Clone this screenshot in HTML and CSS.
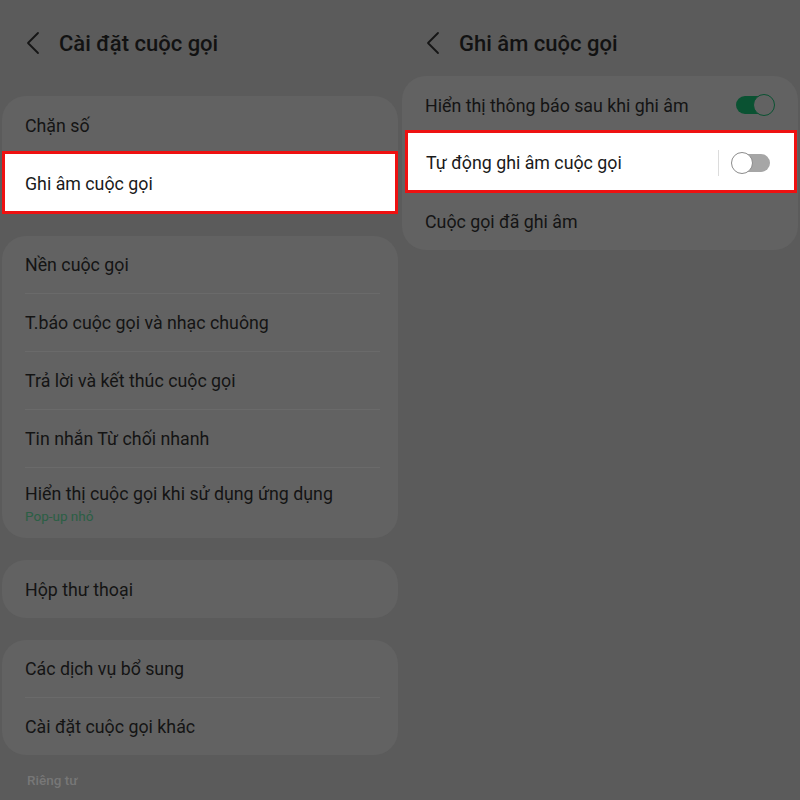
FILE: index.html
```html
<!DOCTYPE html>
<html lang="vi">
<head>
<meta charset="utf-8">
<title>Cài đặt cuộc gọi</title>
<link rel="stylesheet" href="styles.css">
</head>
<body>
<div class="screen">
  <section class="panel">
    <header class="header">
      <svg class="back" width="16" height="24" viewBox="0 0 16 24"><polyline points="12,2 2,12 12,22" fill="none" stroke="#151515" stroke-width="1.8" stroke-linecap="round" stroke-linejoin="round"/></svg>
      <h1 class="title">Cài đặt cuộc gọi</h1>
    </header>
    <div class="card first">
      <div class="row">Chặn số</div>
      <div class="row hl hl-left">Ghi âm cuộc gọi</div>
    </div>
    <div class="card list">
      <div class="row">Nền cuộc gọi</div>
      <hr class="sep">
      <div class="row">T.báo cuộc gọi và nhạc chuông</div>
      <hr class="sep">
      <div class="row">Trả lời và kết thúc cuộc gọi</div>
      <hr class="sep">
      <div class="row">Tin nhắn Từ chối nhanh</div>
      <hr class="sep">
      <div class="row two">
        <span>Hiển thị cuộc gọi khi sử dụng ứng dụng</span>
        <span class="sub">Pop-up nhỏ</span>
      </div>
    </div>
    <div class="card">
      <div class="row">Hộp thư thoại</div>
    </div>
    <div class="card list last">
      <div class="row">Các dịch vụ bổ sung</div>
      <hr class="sep">
      <div class="row">Cài đặt cuộc gọi khác</div>
    </div>
    <div class="section-label">Riêng tư</div>
  </section>

  <section class="panel">
    <header class="header">
      <svg class="back" width="16" height="24" viewBox="0 0 16 24"><polyline points="12,2 2,12 12,22" fill="none" stroke="#151515" stroke-width="1.8" stroke-linecap="round" stroke-linejoin="round"/></svg>
      <h1 class="title">Ghi âm cuộc gọi</h1>
    </header>
    <div class="card">
      <div class="row toggle-row">
        <span>Hiển thị thông báo sau khi ghi âm</span>
        <span class="switch on"><span class="knob"></span></span>
      </div>
      <div class="row toggle-row hl hl-right">
        <span>Tự động ghi âm cuộc gọi</span>
        <span class="ctrl">
          <span class="vline"></span>
          <span class="switch off"><span class="knob"></span></span>
        </span>
      </div>
      <div class="row">Cuộc gọi đã ghi âm</div>
    </div>
  </section>
</div>
</body>
</html>
```

FILE: styles.css
```css
* { box-sizing: border-box; }

html, body {
  margin: 0;
  padding: 0;
  background: #5b5b5b;
  font-family: Roboto, "Noto Sans", "Liberation Sans", sans-serif;
  color: #141414;
}

.screen {
  display: grid;
  grid-template-columns: 400px 400px;
  width: 800px;
  height: 800px;
  overflow: hidden;
}

.panel {
  padding: 0 2px;
}

.header {
  height: 76px;
  padding: 10px 0 0 24px;
  display: flex;
  align-items: center;
}

.back {
  display: block;
  flex: none;
}

.title {
  margin: 0 0 0 17px;
  font-size: 22px;
  font-weight: 500;
  color: #121212;
}

.card {
  background: #626262;
  border-radius: 24px;
  margin-bottom: 22px;
}

.card.first {
  margin-top: 20px;
  margin-bottom: 24px;
}

.card.last {
  margin-bottom: 14px;
}

.row {
  height: 58px;
  padding: 0 23px;
  display: flex;
  align-items: center;
  font-size: 17.8px;
  color: #141414;
}

.list .row {
  height: 57px;
}

.list .row.two {
  height: 70px;
  flex-direction: column;
  align-items: flex-start;
  justify-content: center;
  gap: 4px;
  padding-top: 1px;
}

.sub {
  font-size: 13.5px;
  color: #2b5f45;
}

.sep {
  margin: 0 18px 0 23px;
  border: 0;
  height: 1px;
  background: #6a6a6a;
}

.hl {
  background: #ffffff;
  border: 3px solid #ee1111;
  color: #1a1a1a;
  height: 63px;
}

.hl-left {
  margin: -3px 0 -2px;
  padding: 1px 20px 0;
}

.hl-right {
  margin: -4px 1px -1px 3px;
  padding: 2px 22px 0 18px;
}

.toggle-row {
  justify-content: space-between;
  padding-right: 23px;
}

.ctrl {
  display: flex;
  align-items: center;
  gap: 12px;
}

.vline {
  width: 1px;
  height: 26px;
  background: #dcdcdc;
}

.switch {
  position: relative;
  display: block;
  width: 40px;
  height: 22px;
}

.switch::before {
  content: "";
  position: absolute;
  left: 1px;
  right: 1px;
  top: 2px;
  bottom: 2px;
  border-radius: 10px;
}

.switch.on::before { background: #0a5232; }
.switch.off::before { background: #a6a6a6; }

.knob {
  position: absolute;
  top: 0;
  width: 22px;
  height: 22px;
  border-radius: 50%;
}

.switch.on .knob {
  right: 0;
  background: #626262;
  border: 1.5px solid #0a5232;
}

.switch.off .knob {
  left: 0;
  background: #ffffff;
  border: 1.5px solid #8c8c8c;
}

.section-label {
  padding: 3px 0 0 25px;
  font-size: 13.5px;
  font-weight: 500;
  color: #777777;
}
```
